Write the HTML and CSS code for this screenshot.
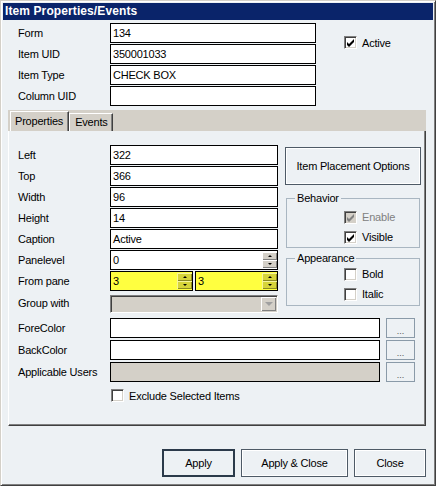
FILE: index.html
```html
<!DOCTYPE html>
<html lang="en">
<head>
    <meta charset="UTF-8">
    <meta name="viewport" content="width=device-width, initial-scale=1.0">
    <title>Item Properties/Events</title>
    <link rel="stylesheet" href="styles.css">
</head>
<body>
<div class="window">
    <div class="caption">Item Properties/Events</div>

    <div class="head">
        <div class="head-grid">
            <span class="lbl">Form</span><div class="field">134</div>
            <span class="lbl">Item UID</span><div class="field">350001033</div>
            <span class="lbl">Item Type</span><div class="field">CHECK BOX</div>
            <span class="lbl">Column UID</span><div class="field"></div>
        </div>
        <label class="check active-check">
            <span class="box"><svg viewBox="0 0 11 11"><path d="M2 5 4 7 9 2v3l-5 5-2-2z"/></svg></span>Active
        </label>
    </div>

    <div class="tabctl">
        <div class="tabs">
            <span class="tab sel">Properties</span>
            <span class="tab">Events</span>
        </div>
        <div class="page">
            <div class="upper">
                <div class="fields">
                    <span class="lbl">Left</span><div class="field">322</div>
                    <span class="lbl">Top</span><div class="field">366</div>
                    <span class="lbl">Width</span><div class="field">96</div>
                    <span class="lbl">Height</span><div class="field">14</div>
                    <span class="lbl">Caption</span><div class="field">Active</div>
                    <span class="lbl">Panelevel</span>
                    <div class="field spin">
                        <span class="val">0</span>
                        <span class="spinbtn"><i class="up"></i><i class="dn"></i></span>
                    </div>
                    <span class="lbl">From pane</span>
                    <div class="pair">
                        <div class="field spin hl">
                            <span class="val">3</span>
                            <span class="spinbtn"><i class="up"></i><i class="dn"></i></span>
                        </div>
                        <div class="field spin hl">
                            <span class="val">3</span>
                            <span class="spinbtn"><i class="up"></i><i class="dn"></i></span>
                        </div>
                    </div>
                    <span class="lbl">Group with</span>
                    <div class="combo"><span class="drop"></span></div>
                </div>

                <div class="side">
                    <button class="btn place">Item Placement Options</button>
                    <fieldset class="group behavior">
                        <legend>Behavior</legend>
                        <label class="check off">
                            <span class="box"><svg viewBox="0 0 11 11"><path d="M2 5 4 7 9 2v3l-5 5-2-2z"/></svg></span>Enable
                        </label>
                        <label class="check">
                            <span class="box"><svg viewBox="0 0 11 11"><path d="M2 5 4 7 9 2v3l-5 5-2-2z"/></svg></span>Visible
                        </label>
                    </fieldset>
                    <fieldset class="group appearance">
                        <legend>Appearance</legend>
                        <label class="check"><span class="box"></span>Bold</label>
                        <label class="check"><span class="box"></span>Italic</label>
                    </fieldset>
                </div>
            </div>

            <div class="lower">
                <span class="lbl">ForeColor</span><div class="field"></div><button class="dots">...</button>
                <span class="lbl">BackColor</span><div class="field"></div><button class="dots">...</button>
                <span class="lbl">Applicable Users</span><div class="field ro"></div><button class="dots">...</button>
            </div>

            <label class="check exclude"><span class="box"></span>Exclude Selected Items</label>
        </div>
    </div>

    <div class="actions">
        <button class="btn default apply">Apply</button>
        <button class="btn apply-close">Apply &amp; Close</button>
        <button class="btn close">Close</button>
    </div>
</div>
</body>
</html>
```

FILE: styles.css
```css
* { box-sizing: border-box; }

html, body {
    margin: 0; padding: 0;
    background: #edf1f4;
    font-family: "Liberation Sans", Arial, sans-serif;
    font-size: 11px;
    letter-spacing: -0.2px;
    color: #000;
}

.window {
    width: 436px;
    height: 486px;
    border: 1px solid;
    border-color: #d4d0c8 #404040 #404040 #d4d0c8;
    box-shadow: inset 1px 1px 0 #fff, inset -1px -1px 0 #808080;
    padding: 2px;
    background: #edf1f4;
    display: flex;
    flex-direction: column;
}

.caption {
    height: 17px;
    line-height: 17px;
    padding-left: 2px;
    background: #0a246a;
    color: #fff;
    font-weight: bold;
    font-size: 12px;
    letter-spacing: 0.1px;
}

/* form / uid block above the tabs */
.head {
    display: flex;
    padding: 3px 0 0 15px;
}

.head-grid {
    display: grid;
    grid-template-columns: 92px 206px;
    grid-auto-rows: 20px;
    row-gap: 1px;
}

.lbl {
    align-self: center;
    white-space: nowrap;
}

.field {
    height: 20px;
    border: 1px solid #000;
    background: #fff;
    padding-left: 2px;
    line-height: 18px;
    white-space: nowrap;
}

.field.ro { background: #d4d0c8; }

/* checkboxes */
.check {
    display: flex;
    align-items: center;
    gap: 5px;
    height: 20px;
    white-space: nowrap;
}

.box {
    width: 13px;
    height: 13px;
    flex: none;
    background: #fff;
    border: 1px solid;
    border-color: #808080 #fff #fff #808080;
    box-shadow: inset 1px 1px 0 #404040, inset -1px -1px 0 #d4d0c8;
}

.box svg {
    display: block;
    width: 11px;
    height: 11px;
    fill: #000;
}

.check.off { color: #808080; }
.check.off .box { background: #d4d0c8; }
.check.off .box svg { fill: #808080; }

.active-check {
    height: 13px;
    margin: 13px 0 0 28px;
}

/* tab control */
.tabctl {
    margin: 4px 7px 0 5px;
}

.tabs {
    display: flex;
    align-items: flex-end;
    height: 21px;
    padding-left: 2px;
    background: #d4d0c8;
}

.tab {
    height: 18px;
    line-height: 17px;
    padding: 0 4px 0 5px;
    border-top: 1px solid #fff;
    border-left: 1px solid #fff;
    border-right: 1px solid #404040;
    box-shadow: inset -1px 0 0 #808080;
}

.tab.sel {
    height: 20px;
    line-height: 18px;
    padding: 0 5px 0 4px;
}

.page {
    height: 295px;
    padding: 14px 0 0 9px;
    border-left: 1px solid #fff;
    border-right: 1px solid #404040;
    border-bottom: 1px solid #404040;
    box-shadow: inset -1px -1px 0 #808080;
}

.upper {
    display: flex;
    gap: 7px;
}

.fields {
    display: grid;
    grid-template-columns: 92px 168px;
    grid-template-rows: repeat(7, 20px) 21px;
    row-gap: 1px;
}

.pair {
    display: flex;
    gap: 2px;
}

.pair .field { flex: 1; }

/* numeric spinners */
.spin {
    display: flex;
    align-items: center;
}

.spin .val { flex: 1; }

.spinbtn {
    width: 15px;
    height: 16px;
    display: flex;
    flex-direction: column;
}

.spinbtn i {
    flex: 1;
    display: flex;
    align-items: center;
    justify-content: center;
    background: #d4d0c8;
    box-shadow: inset 1px 1px 0 #fff, inset -1px -1px 0 #808080;
}

.spinbtn i::after {
    content: "";
    border-left: 2px solid transparent;
    border-right: 2px solid transparent;
}

.spinbtn .up::after { border-bottom: 2px solid #000; }
.spinbtn .dn::after { border-top: 2px solid #000; }

.hl { background: #ffff40; }

.hl .spinbtn i {
    background: #d6d43a;
    box-shadow: inset 1px 1px 0 #f6f49c, inset -1px -1px 0 #8c8a22;
}

/* disabled combo */
.combo {
    align-self: end;
    height: 18px;
    display: flex;
    justify-content: flex-end;
    padding: 1px;
    background: #d4d0c8;
    border: 1px solid;
    border-color: #808080 #fff #fff #808080;
    box-shadow: inset 1px 1px 0 #404040;
}

.drop {
    width: 15px;
    display: flex;
    align-items: center;
    justify-content: center;
    background: #d4d0c8;
    box-shadow: inset 1px 1px 0 #fff, inset -1px -1px 0 #808080;
}

.drop::after {
    content: "";
    border-left: 4px solid transparent;
    border-right: 4px solid transparent;
    border-top: 4px solid #a0a0a0;
}

/* right column */
.side {
    width: 136px;
    margin-top: 2px;
    display: flex;
    flex-direction: column;
}

.btn {
    font: inherit;
    letter-spacing: inherit;
    color: #000;
    background: #edf1f4;
    border: 1px solid #4e5a66;
    box-shadow: inset 0 0 0 1px #fff;
    padding: 0;
    height: 28px;
}

.place { height: 38px; }

.group {
    min-width: 0;
    width: 134px;
    margin: 0 0 0 1px;
    padding: 0 0 0 8px;
    border: 1px solid #a9b6c1;
}

.group legend {
    padding: 0 2px;
    line-height: 12px;
}

.group .check { margin-left: 49px; }

.behavior {
    margin-top: 7px;
    padding-top: 3px;
}

.appearance {
    margin-top: 4px;
    padding-bottom: 1px;
}

/* color rows */
.lower {
    display: grid;
    grid-template-columns: 92px 270px 29px;
    grid-auto-rows: 20px;
    row-gap: 2px;
    column-gap: 0;
    margin-top: 5px;
}

.dots {
    margin-left: 6px;
    width: 29px;
    padding: 6px 0 0;
    font: 9px "Liberation Sans", Arial, sans-serif;
    color: #555;
    background: #edf1f4;
    border: 1px solid #8a9aa8;
}

.exclude {
    height: 13px;
    margin: 7px 0 0 93px;
}

/* dialog buttons */
.actions {
    display: flex;
    justify-content: flex-end;
    gap: 6px;
    margin-top: 23px;
    padding-right: 7px;
}

.apply { width: 73px; }
.apply-close { width: 107px; }
.close { width: 72px; }

.btn.default {
    border: 2px solid #2b3a4a;
    box-shadow: none;
}
```
